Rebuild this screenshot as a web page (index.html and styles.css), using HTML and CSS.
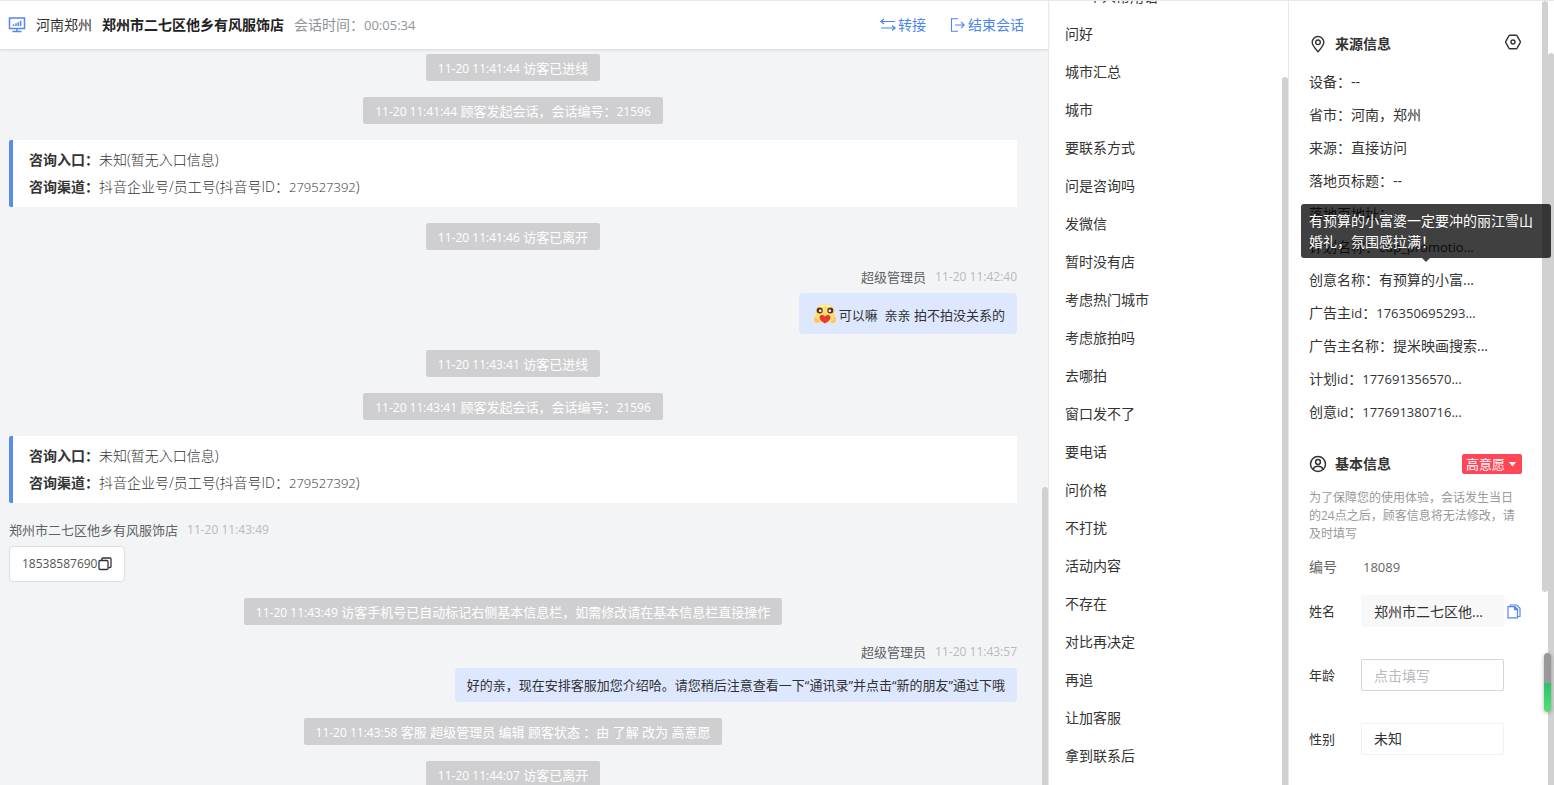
FILE: index.html
```html
<!DOCTYPE html>
<html lang="zh-CN">
<head>
<meta charset="utf-8">
<meta name="viewport" content="width=device-width, initial-scale=1">
<title>客服会话</title>
<link rel="stylesheet" href="styles.css">
</head>
<body>
<div class="app">
  <main class="chat">
    <header class="chat-head">
      <svg class="icon-monitor" width="18" height="18" viewBox="0 0 18 18" fill="none" stroke="currentColor" stroke-width="1.5" aria-hidden="true"><rect x="1.5" y="2" width="15" height="10.5"/><path d="M9 12.5v3M4.5 15.5h9M5.5 10V8.2M8 10V7.2M10.300 10V6.200M12.600 10V4.800"/></svg>
      <span class="region">河南郑州</span>
      <h1 class="shop">郑州市二七区他乡有风服饰店</h1>
      <span class="duration">会话时间：<span class="num">00:05:34</span></span>
      <div class="actions">
        <button type="button" class="action"><svg width="16" height="14" viewBox="0 0 16 14" fill="none" stroke="currentColor" stroke-width="1.1" aria-hidden="true"><path d="M4 1 1 3.500h14M4 6 1 3.500M1 10h14l-3-2.500M15 10l-3 2.500"/></svg>转接</button>
        <button type="button" class="action"><svg width="16" height="14" viewBox="0 0 16 14" fill="none" stroke="currentColor" stroke-width="1.1" aria-hidden="true"><path d="M8 .8H1.500v12.400H8M5 7h9M11 3.800 14.200 7 11 10.200"/></svg>结束会话</button>
      </div>
    </header>
    <div class="log">
      <p class="event"><time>11-20 11:41:44</time> 访客已进线</p>
      <p class="event"><time>11-20 11:41:44</time> 顾客发起会话，会话编号：<span class="num-s">21596</span></p>
      <dl class="card">
        <div><dt>咨询入口：</dt><dd>未知(暂无入口信息)</dd></div>
        <div><dt>咨询渠道：</dt><dd>抖音企业号/员工号(抖音号ID：<span class="num">279527392</span>)</dd></div>
      </dl>
      <p class="event"><time>11-20 11:41:46</time> 访客已离开</p>
      <article class="msg msg-out">
        <div class="meta"><span>超级管理员</span><time>11-20 11:42:40</time></div>
        <p class="bubble bubble-emoji"><svg class="emoji" width="24" height="24" viewBox="0 0 24 24" role="img" aria-label="拥抱"><path d="M12 2C5.500 2 2.500 6.500 2.500 11.500S6 21 12 21s9.500-4.500 9.500-9.500S18.500 2 12 2z" fill="#fbdc6c"/><path d="M6 5.200Q12 1.500 18 5.200" fill="none" stroke="#fff3b8" stroke-width="1.600"/><circle cx="6.700" cy="8.500" r="3" fill="#5a3020"/><circle cx="17.300" cy="8.500" r="3" fill="#5a3020"/><circle cx="7.200" cy="8.800" r="1.300" fill="#fff"/><circle cx="16.800" cy="8.800" r="1.300" fill="#fff"/><path d="M12 21.500C8 19 6.300 17.300 6.600 15c.5-2.300 4-2.600 5.400-.3 1.400-2.300 4.900-2 5.400.3.300 2.300-1.400 4-5.400 6.500z" fill="#e8382f"/><path d="M1.500 14.500c-1.500 2.500-1 6.500 2.500 7 2 .2 3-.8 2.700-2.200L4.500 17 3.500 14zM22.500 14.500c1.500 2.500 1 6.500-2.500 7-2 .2-3-.8-2.700-2.200L19.500 17l1-3z" fill="#fbc862" stroke="#fff1c4" stroke-width=".5"/></svg>可以嘛&nbsp; 亲亲 拍不拍没关系的</p>
      </article>
      <p class="event"><time>11-20 11:43:41</time> 访客已进线</p>
      <p class="event"><time>11-20 11:43:41</time> 顾客发起会话，会话编号：<span class="num-s">21596</span></p>
      <dl class="card">
        <div><dt>咨询入口：</dt><dd>未知(暂无入口信息)</dd></div>
        <div><dt>咨询渠道：</dt><dd>抖音企业号/员工号(抖音号ID：<span class="num">279527392</span>)</dd></div>
      </dl>
      <article class="msg">
        <div class="meta"><span>郑州市二七区他乡有风服饰店</span><time>11-20 11:43:49</time></div>
        <p class="bubble"><span class="num-s">18538587690</span><button type="button" class="copy" aria-label="复制"><svg width="14" height="14" viewBox="0 0 14 14" fill="none" stroke="#333" stroke-width="1.300" aria-hidden="true"><rect x="1" y="3.500" width="9" height="9" rx="1"/><path d="M3.800 3.200V2q0-1 1-1H12q1 0 1 1v7.500q0 1-1 1h-1.500"/></svg></button></p>
      </article>
      <p class="event"><time>11-20 11:43:49</time> 访客手机号已自动标记右侧基本信息栏，如需修改请在基本信息栏直接操作</p>
      <article class="msg msg-out">
        <div class="meta"><span>超级管理员</span><time>11-20 11:43:57</time></div>
        <p class="bubble">好的亲，现在安排客服加您介绍哈。请您稍后注意查看一下“通讯录”并点击“新的朋友”通过下哦</p>
      </article>
      <p class="event"><time>11-20 11:43:58</time> 客服 超级管理员 编辑 顾客状态 ：由 了解 改为 高意愿</p>
      <p class="event"><time>11-20 11:44:07</time> 访客已离开</p>
    </div>
    <i class="bar bar-chat"></i>
  </main>

  <nav class="phrases">
    <div class="phrase-scroll">
      <h2 class="phrase-title">个人常用语</h2>
      <button type="button">问好</button>
      <button type="button">城市汇总</button>
      <button type="button">城市</button>
      <button type="button">要联系方式</button>
      <button type="button">问是咨询吗</button>
      <button type="button">发微信</button>
      <button type="button">暂时没有店</button>
      <button type="button">考虑热门城市</button>
      <button type="button">考虑旅拍吗</button>
      <button type="button">去哪拍</button>
      <button type="button">窗口发不了</button>
      <button type="button">要电话</button>
      <button type="button">问价格</button>
      <button type="button">不打扰</button>
      <button type="button">活动内容</button>
      <button type="button">不存在</button>
      <button type="button">对比再决定</button>
      <button type="button">再追</button>
      <button type="button">让加客服</button>
      <button type="button">拿到联系后</button>
    </div>
    <i class="bar bar-phrases"></i>
  </nav>

  <aside class="side">
    <section class="source">
      <div class="section-head">
        <svg width="18" height="18" viewBox="0 0 18 18" fill="none" stroke="#333" stroke-width="1.400" aria-hidden="true"><path d="M9 16.700C5.500 13 3.200 10.300 3.200 7.300a5.800 5.800 0 0 1 11.600 0c0 3-2.300 5.700-5.800 9.400z"/><circle cx="9" cy="7.300" r="2.300"/></svg>
        <h2>来源信息</h2>
        <button type="button" class="settings" aria-label="设置"><svg width="18" height="18" viewBox="0 0 18 18" fill="none" stroke="#333" stroke-width="1.400" aria-hidden="true"><path d="M5.800 2.300h6.400q.6 0 .9.500l3.100 5.600q.3.600 0 1.200l-3.100 5.600q-.3.500-.9.500H5.800q-.6 0-.9-.5L1.800 9.600q-.3-.6 0-1.200l3.100-5.600q.3-.5.900-.5z"/><circle cx="9" cy="9" r="2"/></svg></button>
      </div>
      <ul class="facts">
        <li>设备：--</li>
        <li>省市：河南，郑州</li>
        <li>来源：直接访问</li>
        <li>落地页标题：--</li>
        <li>落地页地址：</li>
        <li>计划名称：<span class="num">cdp_promotio...</span></li>
        <li class="has-tip">创意名称：有预算的小富...<div class="tip" role="tooltip">有预算的小富婆一定要冲的丽江雪山婚礼，氛围感拉满！</div></li>
        <li>广告主<span class="num">id</span>：<span class="num">176350695293...</span></li>
        <li>广告主名称：提米映画搜索...</li>
        <li>计划<span class="num">id</span>：<span class="num">177691356570...</span></li>
        <li>创意<span class="num">id</span>：<span class="num">177691380716...</span></li>
      </ul>
    </section>
    <section class="basic">
      <div class="section-head">
        <svg width="18" height="18" viewBox="0 0 18 18" fill="none" stroke="#333" stroke-width="1.500" aria-hidden="true"><circle cx="9" cy="9" r="7.500"/><circle cx="9" cy="7" r="2.400"/><path d="M4 14.200Q5.500 11.300 9 11.300t5 2.900"/></svg>
        <h2>基本信息</h2>
        <div class="tag">
          <select aria-label="意愿"><option>高意愿</option></select>
          <svg width="7" height="5" viewBox="0 0 7 5" aria-hidden="true"><path d="M0 0h7L3.500 4.500z" fill="#fff"/></svg>
        </div>
      </div>
      <p class="note">为了保障您的使用体验，会话发生当日的24点之后，顾客信息将无法修改，请及时填写</p>
      <div class="ident"><span>编号</span><span class="num">18089</span></div>
      <div class="field">
        <label for="name">姓名</label>
        <input id="name" class="filled" type="text" value="郑州市二七区他..." readonly>
        <button type="button" class="copy-name" aria-label="复制姓名"><svg width="14" height="15" viewBox="0 0 14 15" fill="none" stroke="#5585ee" stroke-width="1.200" aria-hidden="true"><path d="M1 2.600h6.800l2.700 2.700v8.500H1z"/><path d="M7.500 2.600v3h3z" fill="#5585ee"/><path d="M3.300 2.300V1h6.400L13 4.200v8.300h-2"/></svg></button>
      </div>
      <div class="field">
        <label for="age">年龄</label>
        <input id="age" type="text" placeholder="点击填写">
      </div>
      <div class="field">
        <label for="gender">性别</label>
        <select id="gender"><option>未知</option></select>
      </div>
    </section>
    <i class="bar bar-side"></i>
    <i class="bar bar-page"></i>
    <i class="gauge"></i>
  </aside>
</div>
</body>
</html>
```
FILE: styles.css
```css
* { box-sizing: border-box; }
body, h1, h2, p, ul, dl, dd { margin: 0; }
body {
  font: 400 14px/22px "Open Sans", "Noto Sans CJK SC", sans-serif;
  color: #333;
  background: #fff;
}
button, input, select { font: inherit; color: inherit; margin: 0; }
button { padding: 0; border: 0; background: none; cursor: pointer; }
svg { display: block; flex: none; }
.num { font-size: 13px; }
.num-s, time { font-size: 12px; }

.app {
  display: flex;
  height: 100vh;
  overflow: hidden;
  border-top: 1px solid #e8e8ea;
}
.bar {
  position: absolute;
  width: 6px;
  background: #d1d1d1;
  border-radius: 3px 3px 0 0;
}

/* Conversation */
.chat {
  position: relative;
  flex: 1;
  min-width: 0;
  display: flex;
  flex-direction: column;
  background: #f3f4f6;
}
.chat-head {
  display: flex;
  align-items: center;
  flex: none;
  height: 48px;
  padding: 0 24px 0 8px;
  background: #fff;
  box-shadow: 0 1px 3px rgba(0, 0, 0, .12);
}
.icon-monitor { color: #5585ee; }
.region { margin-left: 10px; }
.shop { margin-left: 10px; font-size: 14px; font-weight: 700; color: #222; }
.duration { margin-left: 10px; color: #909399; }
.actions { display: flex; gap: 24px; margin-left: auto; }
.action { display: flex; align-items: center; gap: 2px; color: #4a86ee; }
.log {
  display: flex;
  flex-direction: column;
  align-items: center;
  gap: 16px;
  flex: 1;
  min-height: 0;
  padding: 5px 31px 0 9px;
  overflow: hidden;
  font-size: 13px;
}
.log > * { flex: none; }
.event {
  padding: 2px 12px 0;
  border-radius: 2px;
  line-height: 25px;
  color: #fff;
  background: #cfcfd1;
}
.card {
  align-self: stretch;
  padding: 6px 16px 7px;
  border-left: 4px solid #5a8de8;
  border-radius: 2px 0 0 2px;
  background: #fff;
  font-size: 14px;
  line-height: 27px;
}
.card div { display: flex; height: 27px; }
.card dt { font-weight: 700; }
.card dd { font-weight: 300; color: #333; }
.msg { align-self: stretch; display: flex; flex-direction: column; align-items: flex-start; gap: 5px; }
.msg-out { align-items: flex-end; }
.meta { display: flex; gap: 9px; color: #606266; }
.meta time { color: #b8babe; }
.bubble {
  display: flex;
  align-items: center;
  padding: 6px 12px;
  border: 1px solid #dcdfe6;
  border-radius: 4px;
  background: #fff;
  color: #555;
}
.copy { margin-left: 1px; }
.msg-out .bubble { border: 0; background: #dde8fe; color: #303133; }
.msg-out .bubble-emoji { align-items: flex-end; padding: 9px 12px 8px 14px; }
.emoji { margin-right: 2px; }
.bar-chat { top: 486px; bottom: 0; right: 0; }

/* Quick phrases */
.phrases {
  position: relative;
  flex: none;
  width: 241px;
  border-left: 1px solid #e8e8ea;
  border-right: 1px solid #e8e8ea;
}
.phrase-scroll { display: flex; flex-direction: column; height: 100%; overflow: hidden; }
.phrases button, .phrase-title {
  flex: none;
  padding: 0 16px;
  font-size: 14px;
  font-weight: 400;
  line-height: 38px;
  text-align: left;
}
.phrase-title { margin-top: -22px; padding-left: 39px; line-height: 36px; }
.bar-phrases { top: 76px; bottom: 0; right: 0; }

/* Visitor details */
.side { position: relative; flex: none; width: 265px; padding: 32px 32px 0 20px; }
.section-head { display: flex; align-items: center; height: 22px; }
.section-head h2 { margin-left: 8px; font-size: 14px; font-weight: 700; }
.settings { align-self: flex-start; margin-left: auto; }
.facts { padding: 10px 0 0; list-style: none; line-height: 33px; white-space: nowrap; }
.facts li { height: 33px; }
.has-tip { position: relative; }
.tip {
  position: absolute;
  z-index: 3;
  left: -8px;
  bottom: 38px;
  width: 250px;
  padding: 6px 8px;
  border-radius: 3px;
  background: rgba(0, 0, 0, .75);
  color: #fff;
  line-height: 21px;
  white-space: normal;
}
.tip::after {
  content: "";
  position: absolute;
  left: 50%;
  top: 100%;
  margin-left: -4px;
  border: 4px solid transparent;
  border-top-color: #404040;
  border-bottom: 0;
}
.basic { padding-top: 25px; }
.tag {
  display: flex;
  align-items: center;
  height: 20px;
  margin-left: auto;
  padding: 0 6px 0 4px;
  border-radius: 2px;
  background: #ff4757;
  color: #fff;
  font-size: 13px;
}
select { appearance: none; }
.tag select { width: 43px; padding: 0; border: 0; background: none; line-height: 20px; }
.note { margin-top: 14px; font-size: 12px; line-height: 18px; color: #999; }
.ident { display: flex; margin: 13px 0 17px; color: #666; }
.ident span:first-child { width: 54px; }
.field { display: flex; align-items: center; height: 32px; margin-bottom: 32px; }
.field label { width: 52px; font-size: 13px; }
.field input, .field select {
  width: 143px;
  height: 32px;
  padding: 0 12px;
  border: 1px solid #d4d5d8;
  border-radius: 2px;
  background: #fff;
}
.field .filled { border-color: #f8f8f8; background: #f8f8f8; }
.field select { border-color: #f2f2f2; }
.field ::placeholder { color: #b8babe; opacity: 1; }
.copy-name { margin-left: 3px; }
.bar-side { top: 0; right: 6px; height: 591px; border-radius: 3px; }
.bar-page { top: 52px; right: 0; bottom: 0; }
.gauge {
  position: absolute;
  z-index: 2;
  top: 652px;
  right: 3px;
  width: 7px;
  height: 59px;
  border-radius: 4px;
  background: linear-gradient(#999 0 50%, #28c46a 52%, #55df75);
  box-shadow: 0 1px 4px rgba(0, 0, 0, .3);
}
```
